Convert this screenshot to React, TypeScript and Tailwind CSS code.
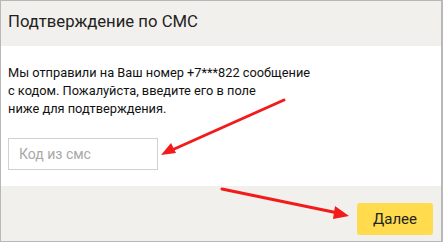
import React from "react";

export default function App() {
  return (
    <div className="relative w-[443px] h-[243px] bg-white" style={{ fontFamily: 'Roboto, "Noto Sans", sans-serif' }}>
      <div className="flex flex-col w-[443px] h-[242px] border border-[#b8b8b8] border-r-2">
        {/* Header */}
        <div className="h-[45px] bg-[#f2f0ec] flex items-center px-[7px] pb-[2px]">
          <h1 className="text-[16.7px] text-[#222] leading-none">Подтверждение по СМС</h1>
        </div>

        {/* Body */}
        <div className="flex-1 bg-white px-[7px] pt-[18px]">
          <p className="text-[12.8px] leading-[18px] text-[#111] whitespace-nowrap">
            Мы отправили на Ваш номер +7***822 сообщение
            <br />
            с кодом. Пожалуйста, введите его в поле
            <br />
            ниже для подтверждения.
          </p>
          <input
            type="text"
            placeholder="Код из смс"
            className="mt-[20px] w-[150px] h-[32px] border border-[#d0d0d0] px-[10px] text-[14px] placeholder:text-[#a8a8a8] outline-none"
          />
        </div>

        {/* Footer */}
        <div className="h-[55px] bg-[#f2f0ec] flex items-start justify-end pt-[17px] pr-[8px]">
          <button className="w-[76px] h-[32px] rounded-[3px] bg-[#ffdb4d] text-[15px] text-[#222]">Далее</button>
        </div>
      </div>

      {/* Annotation arrows */}
      <svg className="absolute inset-0 pointer-events-none" width="443" height="243" viewBox="0 0 443 243">
        <line x1="284" y1="100" x2="172" y2="150" stroke="#f21b1b" strokeWidth="3" strokeLinecap="round" />
        <polygon points="161,155 171,143 176,153" fill="#f21b1b" />
        <line x1="222" y1="189" x2="338" y2="213" stroke="#f21b1b" strokeWidth="3" strokeLinecap="round" />
        <polygon points="349,216 335,206 333,219" fill="#f21b1b" />
      </svg>
    </div>
  );
}
